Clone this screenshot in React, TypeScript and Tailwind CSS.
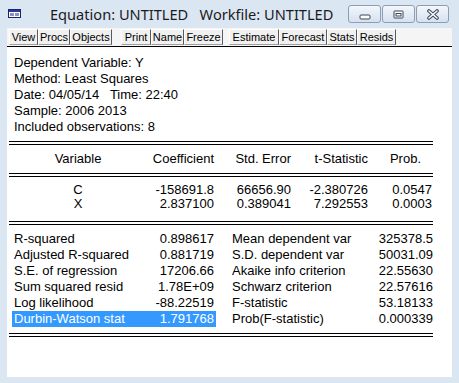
import React from 'react';

type Btn = { label: string; w: number; gap?: number };

const TOOLBAR: Btn[] = [
  { label: 'View', w: 29 },
  { label: 'Procs', w: 32 },
  { label: 'Objects', w: 42 },
  { label: 'Print', w: 30, gap: 9 },
  { label: 'Name', w: 33 },
  { label: 'Freeze', w: 39 },
  { label: 'Estimate', w: 50, gap: 6 },
  { label: 'Forecast', w: 48 },
  { label: 'Stats', w: 30 },
  { label: 'Resids', w: 39 },
];

const HEADER_LINES = [
  'Dependent Variable: Y',
  'Method: Least Squares',
  'Date: 04/05/14   Time: 22:40',
  'Sample: 2006 2013',
  'Included observations: 8',
];

const COEFS = [
  ['C', '-158691.8', '66656.90', '-2.380726', '0.0547'],
  ['X', '2.837100', '0.389041', '7.292553', '0.0003'],
];

const STATS = [
  ['R-squared', '0.898617', 'Mean dependent var', '325378.5'],
  ['Adjusted R-squared', '0.881719', 'S.D. dependent var', '50031.09'],
  ['S.E. of regression', '17206.66', 'Akaike info criterion', '22.55630'],
  ['Sum squared resid', '1.78E+09', 'Schwarz criterion', '22.57616'],
  ['Log likelihood', '-88.22519', 'F-statistic', '53.18133'],
  ['Durbin-Watson stat', '1.791768', 'Prob(F-statistic)', '0.000339'],
];

// two thin black rules, 2px apart
const DoubleRule = ({ className = '' }: { className?: string }) => (
  <div className={`h-[4px] border-y border-black ${className}`} />
);

const CaptionButton = ({ children }: { children: React.ReactNode }) => (
  <div className="w-[33px] h-[18px] rounded-[3px] border border-[#8d9db5] bg-gradient-to-b from-[#f3f7fc] to-[#d6e1ef] flex items-center justify-center">
    {children}
  </div>
);

export default function App() {
  return (
    <div className="w-[459px] h-[383px] bg-[#dbe6f3] overflow-hidden flex flex-col font-['Liberation_Sans',Arial,sans-serif] text-black">
      {/* Title bar */}
      <div className="h-[28px] flex items-start shrink-0">
        <svg width="13" height="9" viewBox="0 0 13 9" className="ml-[8px] mt-[9px]">
          <rect x="0.5" y="0.5" width="12" height="8" fill="#fff" stroke="#1b2466" />
          <rect x="1" y="1" width="11" height="2" fill="#2a3a9c" />
          <rect x="2" y="4" width="4" height="3" fill="#8d8fbf" />
          <rect x="7" y="4" width="4" height="3" fill="#8d8fbf" />
        </svg>
        <div className="ml-[29px] mt-[4px] text-[14.6px] leading-[20px] text-[#1b1b1b] font-['Noto_Sans',sans-serif] whitespace-pre">
          Equation: UNTITLED   Workfile: UNTITLED
        </div>
        <div className="ml-auto mr-[10px] mt-[5px] flex gap-[1px]">
          <CaptionButton>
            <svg width="12" height="6" viewBox="0 0 12 6" className="mt-[5px]">
              <rect x="1" y="1" width="10" height="4" rx="1" fill="#fff" stroke="#3b4556" />
            </svg>
          </CaptionButton>
          <CaptionButton>
            <svg width="11" height="9" viewBox="0 0 11 9">
              <rect x="1" y="1" width="9" height="7" rx="0.5" fill="#fff" stroke="#3b4556" />
              <rect x="3" y="3.5" width="5" height="2.5" fill="none" stroke="#3b4556" />
            </svg>
          </CaptionButton>
          <CaptionButton>
            <svg width="14" height="11" viewBox="0 0 14 11">
              <path d="M3 2 L11 9 M11 2 L3 9" stroke="#3b4556" strokeWidth="3.6" strokeLinecap="round" />
              <path d="M3 2 L11 9 M11 2 L3 9" stroke="#fff" strokeWidth="1.6" strokeLinecap="round" />
            </svg>
          </CaptionButton>
        </div>
      </div>

      {/* Toolbar */}
      <div className="mx-[7px] h-[19px] shrink-0 bg-[#f5f5f5] border-b border-black flex items-start pl-[2px] pt-[1px]">
        {TOOLBAR.map((b) => (
          <div
            key={b.label}
            style={{ width: b.w, marginLeft: b.gap ?? 0 }}
            className="h-[16px] border-l border-t border-white border-r border-r-[#5a5a5a] border-b border-b-[#a0a0a0] text-[11px] leading-[14px] text-center bg-[#f0f0f0]"
          >
            {b.label}
          </div>
        ))}
      </div>

      {/* Output */}
      <div className="mx-[7px] h-[330px] bg-white shrink-0 text-[13px]">
        <div className="ml-[2px] w-[424px]">
          <div className="pl-[5px] pt-[8px] leading-[16px]">
            {HEADER_LINES.map((l) => (
              <div key={l} className="whitespace-pre">{l}</div>
            ))}
          </div>

          <DoubleRule className="mt-[6px]" />

          <div className="mt-[6px] grid grid-cols-[138px_67px_77px_77px_64px] leading-[16px]">
            <div className="text-center">Variable</div>
            <div className="text-right">Coefficient</div>
            <div className="text-right">Std. Error</div>
            <div className="text-right">t-Statistic</div>
            <div className="text-right pr-[11px]">Prob.</div>
          </div>

          <DoubleRule className="mt-[6px]" />

          <div className="mt-[6px] leading-[14px]">
            {COEFS.map((r) => (
              <div key={r[0]} className="grid grid-cols-[138px_67px_77px_77px_64px]">
                <div className="text-center">{r[0]}</div>
                <div className="text-right">{r[1]}</div>
                <div className="text-right">{r[2]}</div>
                <div className="text-right">{r[3]}</div>
                <div className="text-right">{r[4]}</div>
              </div>
            ))}
          </div>

          <DoubleRule className="mt-[10px]" />

          <div className="mt-[6px] leading-[16px]">
            {STATS.map((r, i) => (
              <div key={r[0]} className="flex">
                <div
                  className={`ml-[3px] w-[204px] flex justify-between px-[2px] ${
                    i === STATS.length - 1 ? 'bg-[#3399ff] text-white' : ''
                  }`}
                >
                  <span>{r[0]}</span>
                  <span>{r[1]}</span>
                </div>
                <div className="w-[217px] flex justify-between pl-[16px]">
                  <span>{r[2]}</span>
                  <span>{r[3]}</span>
                </div>
              </div>
            ))}
          </div>

          <DoubleRule className="mt-[6px]" />
        </div>
      </div>
    </div>
  );
}
